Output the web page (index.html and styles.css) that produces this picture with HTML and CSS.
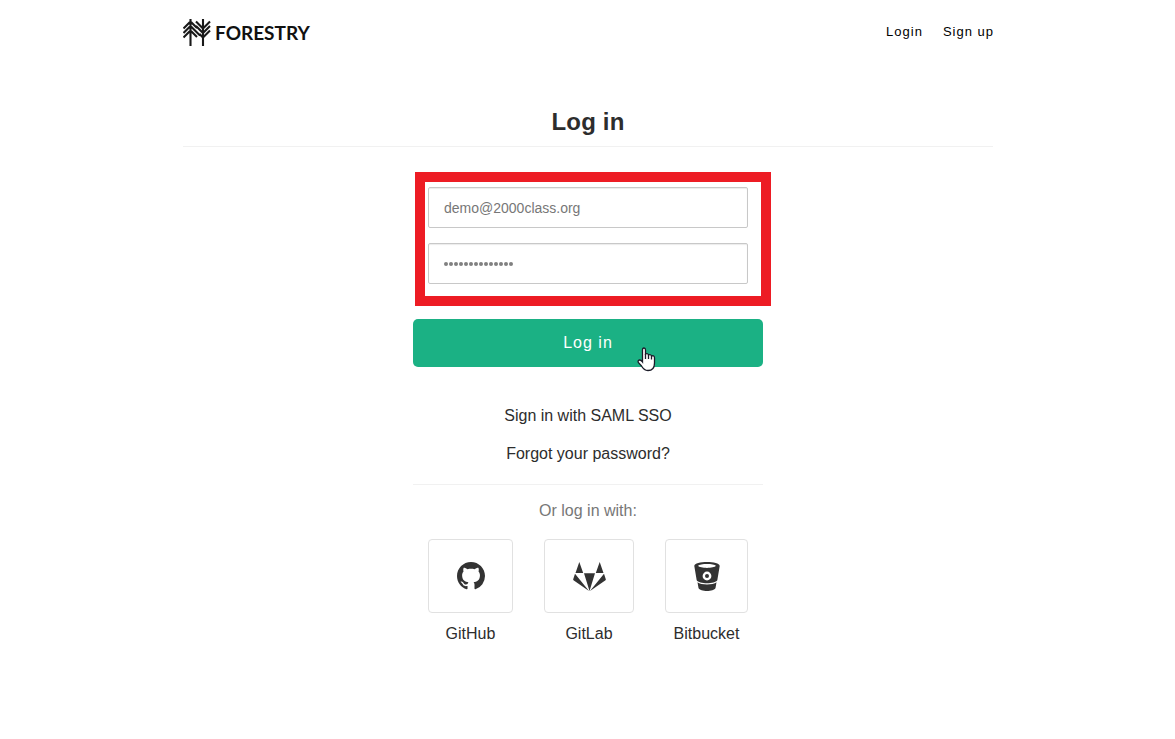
FILE: index.html
```html
<!DOCTYPE html>
<html lang="en">
<head>
<meta charset="utf-8">
<title>Log in - Forestry</title>
<link rel="stylesheet" href="styles.css">
</head>
<body>
<div class="page">
  <header class="header">
    <a class="brand">
      <svg class="brand-mark" width="28" height="28" viewBox="0 0 28 28" fill="none" stroke="#191919" stroke-width="2.1">
        <path d="M7.5 0V27M20 0V27M.5 9.500L7.500 2.500L14 9M.5 14L7.500 7L17 16.500M.5 18.500L7.500 11.500L14 18M13 2.500L20 9.500L27 2.500M13 7L20 14L27 7M16.500 15L20 18.500L27 11.500"/>
      </svg>
      <span class="brand-name">FORESTRY</span>
    </a>
    <nav class="nav"><a>Login</a><a>Sign up</a></nav>
  </header>
  <h1 class="title">Log in</h1>
  <main class="login">
    <form class="form">
      <div class="fields">
        <div class="field">demo@2000class.org</div>
        <div class="field field-password"><i></i><i></i><i></i><i></i><i></i><i></i><i></i><i></i><i></i><i></i><i></i><i></i><i></i><i></i></div>
        <div class="highlight"></div>
      </div>
      <button class="submit" type="button">Log in</button>
    </form>
    <div class="links"><a>Sign in with SAML SSO</a><a>Forgot your password?</a></div>
    <p class="alternative">Or log in with:</p>
    <div class="providers">
      <a class="provider github">
        <span class="tile"><svg width="28" height="28" viewBox="0 0 16 16"><path d="M8 0C3.580 0 0 3.580 0 8c0 3.540 2.290 6.530 5.470 7.590.4.070.55-.17.55-.38 0-.19-.01-.82-.01-1.490-2.010.37-2.530-.49-2.690-.94-.09-.23-.48-.94-.82-1.130-.28-.15-.68-.52-.01-.53.63-.01 1.080.58 1.230.82.72 1.210 1.870.87 2.330.66.07-.52.28-.87.51-1.070-1.780-.2-3.640-.89-3.640-3.950 0-.87.31-1.590.82-2.150-.08-.2-.36-1.020.08-2.120 0 0 .67-.21 2.200.82.64-.18 1.320-.27 2-.27s1.360.09 2 .27c1.530-1.040 2.200-.82 2.200-.82.44 1.100.16 1.920.08 2.120.51.56.82 1.270.82 2.150 0 3.070-1.870 3.750-3.650 3.950.29.25.54.73.54 1.480 0 1.070-.01 1.930-.01 2.200 0 .21.15.46.55.38A8.010 8.010 0 0 0 16 8c0-4.420-3.580-8-8-8z"/></svg></span>
        <span>GitHub</span>
      </a>
      <a class="provider gitlab">
        <span class="tile"><svg width="33" height="29" viewBox="0 0 33 29"><path d="M6.300 0L10.200 11H2.500ZM26.700 0L30.500 11H22.800ZM11 11.300H22L16.500 29ZM2 11.800L16 29L.5 18.200Q0 17.800.2 17.200ZM31 11.800L17 29L32.500 18.200Q33 17.800 32.800 17.200Z"/></svg></span>
        <span>GitLab</span>
      </a>
      <a class="provider bitbucket">
        <span class="tile"><svg width="26" height="29" viewBox="0 0 26 29"><path fill-rule="evenodd" d="M.3 4C.3-1.300 25.700-1.300 25.700 4L23.300 18.200C21 22.200 5 22.200 2.700 18.200ZM4 3.800C6 6.600 20 6.600 22 3.800C20 1.300 6 1.300 4 3.800ZM13 9.600A4.400 4.400 0 1 0 13 18.400A4.400 4.400 0 1 0 13 9.600Z"/><path fill-rule="evenodd" d="M13 10.800A3.200 3.200 0 1 0 13 17.200A3.200 3.200 0 1 0 13 10.800ZM13 12.200A1.800 1.800 0 1 1 13 15.800A1.800 1.800 0 1 1 13 12.200Z" class="hidden-ring"/><circle cx="13" cy="14" r="2"/><path d="M3.500 20.300C7 23.300 19 23.300 22.500 20.300L21.500 26C20 30 6 30 4.500 26Z"/></svg></span>
        <span>Bitbucket</span>
      </a>
    </div>
  </main>
</div>
<svg class="cursor" width="19" height="25" viewBox="0 0 19 25"><path d="M5.500 15V3Q5.500 1 7 1Q8.500 1 8.500 3V7Q10.800 6 11.500 8Q13.700 7 14.500 9Q17.500 8 17.500 11V16Q17.500 23.500 11 23.500Q7 23.500 4.500 19L1.300 15.500Q.5 13.500 2.500 13Q4 12.800 5.500 15Z" fill="#fff" stroke="#1b1b28" stroke-width="1.300"/><path d="M8.500 7V12M11.500 8V12M14.500 9V12.500" stroke="#1b1b28" stroke-width="1.300"/></svg>
</body>
</html>
```
FILE: styles.css
```css
* { box-sizing: border-box; }
body { margin: 0; background: #fff; color: #2d2d2d; font: 16px/24px "Liberation Sans", Arial, sans-serif; }
.page { width: 810px; margin-left: 183px; }
.header { display: flex; justify-content: space-between; height: 64px; }
.brand { display: flex; padding-top: 19px; }
.brand-mark { display: block; }
.brand-name { margin-left: 4px; color: #111; font: bold 19px/28px Lato, sans-serif; }
.nav { display: flex; gap: 20px; padding-top: 20px; color: #000; font-size: 13px; letter-spacing: 1px; margin-right: -1px; }
.title { height: 83px; margin: 0; padding-top: 44px; border-bottom: 1px solid #f1f1f1; font-size: 24px; line-height: 28px; text-align: center; letter-spacing: .2px; }
.login { width: 350px; margin: 0 auto; }
.fields { position: relative; display: grid; gap: 15px; padding: 40px 15px 35px; }
.field { display: flex; align-items: center; height: 41px; padding: 0 15px; border: 1px solid #c8c8c8; border-radius: 2px; box-shadow: inset 0 1px 1px rgba(0, 0, 0, .08); color: #777; font-size: 14px; }
.field-password { gap: 1px; }
.field-password i { width: 4px; height: 4px; border-radius: 50%; background: #808080; }
.highlight { position: absolute; left: 2px; top: 25px; width: 356px; height: 134px; border: 10px solid #ed1c24; }
.submit { display: block; width: 350px; height: 48px; padding: 0; border: 0; border-radius: 5px; background: #1bb184; color: #fff; font: 16px/48px "Liberation Sans", Arial, sans-serif; letter-spacing: 1px; }
.links { display: grid; gap: 14px; padding: 37px 0 18px; border-bottom: 1px solid #f1f1f1; text-align: center; }
.alternative { margin: 14px 0 16px; text-align: center; color: #777; }
.providers { display: flex; justify-content: space-between; padding: 0 15px; }
.provider { display: grid; gap: 9px; text-align: center; }
.tile { display: flex; align-items: center; justify-content: center; height: 74px; border: 1px solid #e1e1e1; border-radius: 4px; }
.tile svg { fill: #333; }
.github { width: 85px; }
.gitlab { width: 90px; }
.bitbucket { width: 83px; }
.hidden-ring { display: none; }
.cursor { position: absolute; left: 637px; top: 347px; }
```
